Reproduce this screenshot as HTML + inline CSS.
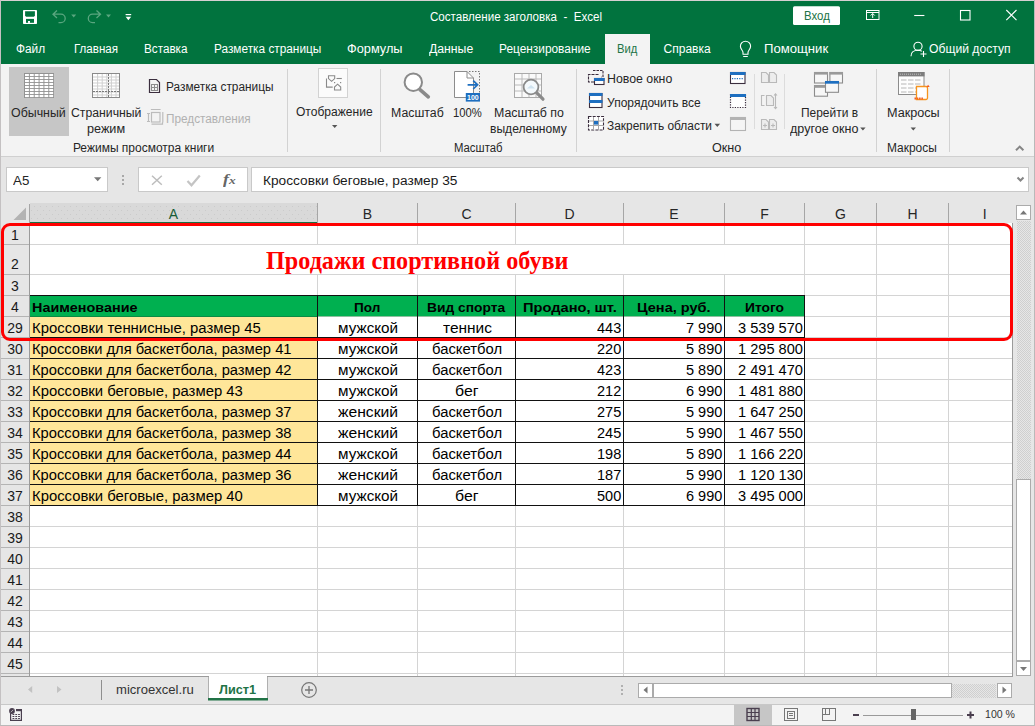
<!DOCTYPE html><html><head><meta charset="utf-8"><title>Excel</title><style>
html,body{margin:0;padding:0}body{width:1035px;height:726px;position:relative;overflow:hidden;background:#e6e6e6;font-family:"Liberation Sans",sans-serif}
.t{position:absolute;white-space:pre;transform-origin:0 0;line-height:normal}
.s{font-family:"Liberation Serif",serif}
svg{position:absolute;left:0;top:0}
</style></head><body>
<svg width="1035" height="726" viewBox="0 0 1035 726">
<defs><pattern id="dots" width="6" height="8" patternUnits="userSpaceOnUse"><rect width="6" height="8" fill="#d9d9d9"/><rect x="1" y="2" width="1" height="1" fill="#cbcbcb"/><rect x="4" y="6" width="1" height="1" fill="#cbcbcb"/></pattern><pattern id="trk" width="2" height="2" patternUnits="userSpaceOnUse"><rect width="2" height="2" fill="#e6e6e6"/><rect width="1" height="1" fill="#cfcfcf"/><rect x="1" y="1" width="1" height="1" fill="#cfcfcf"/></pattern></defs>
<rect x="0" y="0" width="1035" height="726" fill="#e6e6e6" />
<rect x="1" y="1" width="1033" height="63" fill="#01733e" />
<rect x="605" y="34" width="45" height="30" fill="#f3f3f3" />
<rect x="1" y="64" width="1033" height="92" fill="#f3f3f3" />
<rect x="1" y="156" width="1033" height="1" fill="#d0d0d0" />
<rect x="9" y="67" width="60" height="69" fill="#c6c6c6" />
<rect x="287" y="69" width="1" height="83" fill="#d2d2d2" />
<rect x="380" y="69" width="1" height="83" fill="#d2d2d2" />
<rect x="576" y="69" width="1" height="83" fill="#d2d2d2" />
<rect x="876" y="69" width="1" height="83" fill="#d2d2d2" />
<rect x="949" y="69" width="1" height="83" fill="#d2d2d2" />
<rect x="754" y="74" width="1" height="55" fill="#dcdcdc" />
<rect x="784" y="74" width="1" height="55" fill="#dcdcdc" />
<rect x="6.5" y="167.5" width="101" height="24" fill="#fff" stroke="#c9c9c9"/>
<rect x="138.5" y="167.5" width="109" height="24" fill="#fff" stroke="#c9c9c9"/>
<rect x="251.5" y="167.5" width="777" height="24" fill="#fff" stroke="#c9c9c9"/>
<path d="M94 177.300h7.400l-3.700 4z" fill="#777"/>
<rect x="122" y="175" width="2" height="2" fill="#a8a8a8" />
<rect x="122" y="179" width="2" height="2" fill="#a8a8a8" />
<rect x="122" y="183" width="2" height="2" fill="#a8a8a8" />
<path d="M152 175.800l9.800 9M161.800 175.800l-9.800 9" stroke="#bdbdbd" stroke-width="1.500" fill="none"/>
<path d="M187.500 181l4 4.300l8.300-9.800" stroke="#c4c4c4" stroke-width="2.200" fill="none"/>
<path d="M1017.500 177.500l3 3l3-3" stroke="#858585" stroke-width="2" fill="none"/>
<rect x="30" y="203" width="287" height="19" fill="url(#dots)" />
<rect x="30" y="222" width="287" height="1" fill="#1a6e42" />
<path d="M13.5 220L26 207.5V220z" fill="#b3b3b3"/>
<rect x="317" y="203" width="1" height="20" fill="#a6a6a6" />
<rect x="417" y="203" width="1" height="20" fill="#a6a6a6" />
<rect x="515" y="203" width="1" height="20" fill="#a6a6a6" />
<rect x="623" y="203" width="1" height="20" fill="#a6a6a6" />
<rect x="724" y="203" width="1" height="20" fill="#a6a6a6" />
<rect x="804" y="203" width="1" height="20" fill="#a6a6a6" />
<rect x="876" y="203" width="1" height="20" fill="#a6a6a6" />
<rect x="948" y="203" width="1" height="20" fill="#a6a6a6" />
<rect x="29" y="204" width="1" height="19" fill="#a6a6a6" />
<rect x="30" y="223" width="982" height="453" fill="#fff" />
<rect x="30" y="244" width="982" height="1" fill="#d4d4d4" />
<rect x="30" y="274" width="982" height="1" fill="#d4d4d4" />
<rect x="30" y="295" width="982" height="1" fill="#d4d4d4" />
<rect x="30" y="316" width="982" height="1" fill="#d4d4d4" />
<rect x="30" y="337" width="982" height="1" fill="#d4d4d4" />
<rect x="30" y="358" width="982" height="1" fill="#d4d4d4" />
<rect x="30" y="379" width="982" height="1" fill="#d4d4d4" />
<rect x="30" y="400" width="982" height="1" fill="#d4d4d4" />
<rect x="30" y="421" width="982" height="1" fill="#d4d4d4" />
<rect x="30" y="442" width="982" height="1" fill="#d4d4d4" />
<rect x="30" y="463" width="982" height="1" fill="#d4d4d4" />
<rect x="30" y="484" width="982" height="1" fill="#d4d4d4" />
<rect x="30" y="505" width="982" height="1" fill="#d4d4d4" />
<rect x="30" y="526" width="982" height="1" fill="#d4d4d4" />
<rect x="30" y="547" width="982" height="1" fill="#d4d4d4" />
<rect x="30" y="568" width="982" height="1" fill="#d4d4d4" />
<rect x="30" y="589" width="982" height="1" fill="#d4d4d4" />
<rect x="30" y="610" width="982" height="1" fill="#d4d4d4" />
<rect x="30" y="631" width="982" height="1" fill="#d4d4d4" />
<rect x="30" y="652" width="982" height="1" fill="#d4d4d4" />
<rect x="30" y="673" width="982" height="1" fill="#d4d4d4" />
<rect x="317" y="223" width="1" height="453" fill="#d4d4d4" />
<rect x="417" y="223" width="1" height="453" fill="#d4d4d4" />
<rect x="515" y="223" width="1" height="453" fill="#d4d4d4" />
<rect x="623" y="223" width="1" height="453" fill="#d4d4d4" />
<rect x="724" y="223" width="1" height="453" fill="#d4d4d4" />
<rect x="804" y="223" width="1" height="453" fill="#d4d4d4" />
<rect x="876" y="223" width="1" height="453" fill="#d4d4d4" />
<rect x="948" y="223" width="1" height="453" fill="#d4d4d4" />
<rect x="30" y="245" width="774" height="29" fill="#fff" />
<rect x="1" y="223" width="28" height="453" fill="#e6e6e6" />
<rect x="29" y="223" width="1" height="453" fill="#9b9b9b" />
<rect x="1" y="244" width="28" height="1" fill="#b4b4b4" />
<rect x="1" y="274" width="28" height="1" fill="#b4b4b4" />
<rect x="1" y="295" width="28" height="1" fill="#b4b4b4" />
<rect x="1" y="316" width="28" height="1" fill="#b4b4b4" />
<rect x="1" y="337" width="28" height="1" fill="#b4b4b4" />
<rect x="1" y="358" width="28" height="1" fill="#b4b4b4" />
<rect x="1" y="379" width="28" height="1" fill="#b4b4b4" />
<rect x="1" y="400" width="28" height="1" fill="#b4b4b4" />
<rect x="1" y="421" width="28" height="1" fill="#b4b4b4" />
<rect x="1" y="442" width="28" height="1" fill="#b4b4b4" />
<rect x="1" y="463" width="28" height="1" fill="#b4b4b4" />
<rect x="1" y="484" width="28" height="1" fill="#b4b4b4" />
<rect x="1" y="505" width="28" height="1" fill="#b4b4b4" />
<rect x="1" y="526" width="28" height="1" fill="#b4b4b4" />
<rect x="1" y="547" width="28" height="1" fill="#b4b4b4" />
<rect x="1" y="568" width="28" height="1" fill="#b4b4b4" />
<rect x="1" y="589" width="28" height="1" fill="#b4b4b4" />
<rect x="1" y="610" width="28" height="1" fill="#b4b4b4" />
<rect x="1" y="631" width="28" height="1" fill="#b4b4b4" />
<rect x="1" y="652" width="28" height="1" fill="#b4b4b4" />
<rect x="1" y="673" width="28" height="1" fill="#b4b4b4" />
<rect x="1012" y="223" width="1" height="454" fill="#9b9b9b" />
<rect x="1" y="676" width="1012" height="1" fill="#9b9b9b" />
<rect x="30" y="296" width="774" height="20" fill="#00b050" />
<rect x="30" y="317" width="287" height="188" fill="#ffe699" />
<rect x="30" y="295" width="775" height="1" fill="#111" />
<rect x="30" y="316" width="287" height="1" fill="#0c8a45" />
<rect x="318" y="316" width="486" height="1" fill="#8fbf9f" />
<rect x="30" y="337" width="775" height="1" fill="#111" />
<rect x="30" y="358" width="775" height="1" fill="#111" />
<rect x="30" y="379" width="775" height="1" fill="#111" />
<rect x="30" y="400" width="775" height="1" fill="#111" />
<rect x="30" y="421" width="775" height="1" fill="#111" />
<rect x="30" y="442" width="775" height="1" fill="#111" />
<rect x="30" y="463" width="775" height="1" fill="#111" />
<rect x="30" y="484" width="775" height="1" fill="#111" />
<rect x="30" y="505" width="775" height="1" fill="#111" />
<rect x="317" y="295" width="1" height="211" fill="#111" />
<rect x="417" y="295" width="1" height="211" fill="#111" />
<rect x="515" y="295" width="1" height="211" fill="#111" />
<rect x="623" y="295" width="1" height="211" fill="#111" />
<rect x="724" y="295" width="1" height="211" fill="#111" />
<rect x="804" y="295" width="1" height="211" fill="#111" />
<rect x="1017" y="221" width="14" height="258" fill="url(#trk)" />
<rect x="1016.5" y="205.5" width="14" height="14" fill="#fff" stroke="#ababab"/>
<path d="M1020 214.5h7l-3.5-4z" fill="#777"/>
<rect x="1016.5" y="479.5" width="14" height="181" fill="#fff" stroke="#ababab"/>
<rect x="1016.5" y="661.5" width="14" height="14" fill="#fff" stroke="#ababab"/>
<path d="M1020 667h7l-3.5 4z" fill="#777"/>
<rect x="101" y="680" width="1" height="20" fill="#8f8f8f" />
<rect x="209" y="677" width="59" height="23" fill="#fff" />
<rect x="208" y="677" width="1" height="23" fill="#b0b0b0" />
<rect x="267" y="677" width="1" height="23" fill="#b0b0b0" />
<rect x="208" y="698" width="60" height="2.5" fill="#217346" />
<rect x="209" y="676" width="58" height="1" fill="#fff" />
<path d="M28 689.5l4.200-3.500v7z M61.5 689.5l-4.5-3.5v7z" fill="#c2c2c2"/>
<circle cx="309" cy="690" r="7.3" fill="none" stroke="#777" stroke-width="1.2"/><path d="M305 690h8M309 686v8" stroke="#777" stroke-width="1.3"/>
<rect x="621" y="685" width="2" height="2" fill="#b0b0b0" />
<rect x="621" y="689" width="2" height="2" fill="#b0b0b0" />
<rect x="621" y="693" width="2" height="2" fill="#b0b0b0" />
<rect x="638.5" y="683.5" width="14" height="14" fill="#fff" stroke="#ababab"/>
<path d="M647.5 686.5v7l-4-3.5z" fill="#777"/>
<rect x="653.5" y="683.5" width="298" height="14" fill="#fff" stroke="#ababab"/>
<rect x="952" y="684" width="44" height="14" fill="url(#trk)" />
<rect x="997.5" y="683.5" width="14" height="14" fill="#fff" stroke="#ababab"/>
<path d="M1002.5 686.5v7l4-3.5z" fill="#777"/>
<rect x="1" y="704" width="1033" height="1" fill="#c8c8c8" />
<rect x="1" y="705" width="1033" height="20" fill="#f3f3f3" />
<rect x="734" y="705" width="38" height="20" fill="#c6c6c6" />
<path d="M10.600 713v7.400h10.800v-11.200" fill="none" stroke="#4a3f4f" stroke-width="1.200"/><rect x="16" y="709" width="6" height="2.200" fill="#4a3f4f"/><circle cx="12" cy="711" r="2.900" fill="#4a3f4f"/><path d="M10.800 712.200l2.400-2.400" stroke="#d8d8d8" stroke-width="0.700"/>
<rect x="12.5" y="714" width="1.8" height="1" fill="#4a3f4f" />
<rect x="15.3" y="714" width="1.8" height="1" fill="#4a3f4f" />
<rect x="18.1" y="714" width="1.8" height="1" fill="#4a3f4f" />
<rect x="12.5" y="716" width="1.8" height="1" fill="#4a3f4f" />
<rect x="15.3" y="716" width="1.8" height="1" fill="#4a3f4f" />
<rect x="18.1" y="716" width="1.8" height="1" fill="#4a3f4f" />
<rect x="12.5" y="718" width="1.8" height="1" fill="#4a3f4f" />
<rect x="15.3" y="718" width="1.8" height="1" fill="#4a3f4f" />
<rect x="18.1" y="718" width="1.8" height="1" fill="#4a3f4f" />
<g stroke="#4a3f4f" fill="none"><rect x="747" y="708.5" width="12" height="12" stroke-width="1.4"/><path d="M751.3 708.5v12M755 708.5v12M747 712.5h12M747 716.5h12" stroke-width="1.2"/></g>
<g stroke="#777" fill="none"><rect x="784.5" y="708.5" width="13" height="12"/><rect x="787.5" y="711.5" width="7" height="7"/><path d="M789 713.5h4M789 715.5h4" /></g>
<g stroke="#777" fill="none"><rect x="822.5" y="708.5" width="13" height="12"/><path d="M825.5 708.5v6M829.5 708.5v6M822.5 714.500h7.500" /></g>
<rect x="853" y="714" width="6" height="2" fill="#4a3f4f" />
<rect x="863" y="715" width="100" height="1" fill="#9a9a9a" />
<rect x="911" y="709" width="5" height="11" fill="#666" />
<rect x="967" y="714" width="7" height="2" fill="#4a3f4f" />
<rect x="969.5" y="711.5" width="2" height="7" fill="#4a3f4f" />
<rect x="0" y="0" width="1035" height="1" fill="#d6d0d2" />
<rect x="0" y="0" width="1" height="726" fill="#c4c1c2" />
<rect x="1034" y="0" width="1" height="726" fill="#b9b9b9" />
<rect x="0" y="725" width="1035" height="1" fill="#b9b9b9" />
<rect x="23" y="10" width="14" height="14" rx="0.800" fill="#fff"/><path d="M25.100 11.200h9.800v4.600l-1 1h-7.800l-1-1z" fill="#01733e"/><rect x="26" y="18.900" width="8" height="3.900" fill="#01733e"/><rect x="28" y="21" width="2" height="1.900" fill="#fff"/>
<g fill="none" stroke="#5aa67f" stroke-width="1.3"><path d="M57 10.5l-4 3.7l4 3.7M53 14.2h8a4.2 4.2 0 0 1 0 8.400h-2.500"/><path d="M96.500 10.500l4 3.700l-4 3.700M100.500 14.200h-8a4.200 4.200 0 0 0 0 8.400h2.500"/></g>
<path d="M71.200 14.600h5l-2.500 3z M106 14.600h5l-2.500 3z" fill="#5aa67f"/>
<rect x="125.600" y="14" width="5.600" height="1.200" fill="#fff"/><path d="M125.600 16.800h5.600l-2.800 3.400z" fill="#fff"/>
<rect x="793" y="6.300" width="47" height="18.700" rx="1.500" fill="#fff"/>
<g fill="none" stroke="#fff" stroke-width="1"><rect x="866.500" y="10.500" width="12.500" height="9"/><path d="M866.500 12.500h12.500M872.700 18v-4.500M870.700 15.500l2-2l2 2"/></g>
<g fill="none" stroke="#fff" stroke-width="1.100"><path d="M914.200 15.500h10.200"/><rect x="960.500" y="10.500" width="9.500" height="9.500"/><path d="M1006.300 10l10.200 10.200M1016.500 10l-10.200 10.200"/></g>
<g fill="none" stroke="#fff" stroke-width="1.100"><path d="M743 52.500c0-2-2.600-3.200-2.600-6.200a5.100 5.100 0 0 1 10.200 0c0 3-2.600 4.200-2.600 6.200v1.800h-5zM743.200 56.500h4.600"/></g>
<g fill="none" stroke="#fff" stroke-width="1.100"><circle cx="918" cy="46.300" r="4.100"/><path d="M911 56.300c0-4 3-6 7-6c1.500 0 2.800 0.300 3.800 0.900M923.500 51v6M920.500 54h6"/></g>
<rect x="24" y="73" width="30" height="25" fill="#929292"/>
<rect x="25" y="74" width="3.9" height="2.1" fill="#fff" />
<rect x="29.85" y="74" width="3.9" height="2.1" fill="#fff" />
<rect x="34.7" y="74" width="3.9" height="2.1" fill="#fff" />
<rect x="39.55" y="74" width="3.9" height="2.1" fill="#fff" />
<rect x="44.4" y="74" width="3.9" height="2.1" fill="#fff" />
<rect x="49.25" y="74" width="3.9" height="2.1" fill="#fff" />
<rect x="25" y="77" width="3.9" height="2.1" fill="#fff" />
<rect x="29.85" y="77" width="3.9" height="2.1" fill="#fff" />
<rect x="34.7" y="77" width="3.9" height="2.1" fill="#fff" />
<rect x="39.55" y="77" width="3.9" height="2.1" fill="#fff" />
<rect x="44.4" y="77" width="3.9" height="2.1" fill="#fff" />
<rect x="49.25" y="77" width="3.9" height="2.1" fill="#fff" />
<rect x="25" y="80" width="3.9" height="2.1" fill="#fff" />
<rect x="29.85" y="80" width="3.9" height="2.1" fill="#fff" />
<rect x="34.7" y="80" width="3.9" height="2.1" fill="#fff" />
<rect x="39.55" y="80" width="3.9" height="2.1" fill="#fff" />
<rect x="44.4" y="80" width="3.9" height="2.1" fill="#fff" />
<rect x="49.25" y="80" width="3.9" height="2.1" fill="#fff" />
<rect x="25" y="83" width="3.9" height="2.1" fill="#fff" />
<rect x="29.85" y="83" width="3.9" height="2.1" fill="#fff" />
<rect x="34.7" y="83" width="3.9" height="2.1" fill="#fff" />
<rect x="39.55" y="83" width="3.9" height="2.1" fill="#fff" />
<rect x="44.4" y="83" width="3.9" height="2.1" fill="#fff" />
<rect x="49.25" y="83" width="3.9" height="2.1" fill="#fff" />
<rect x="25" y="86" width="3.9" height="2.1" fill="#fff" />
<rect x="29.85" y="86" width="3.9" height="2.1" fill="#fff" />
<rect x="34.7" y="86" width="3.9" height="2.1" fill="#fff" />
<rect x="39.55" y="86" width="3.9" height="2.1" fill="#fff" />
<rect x="44.4" y="86" width="3.9" height="2.1" fill="#fff" />
<rect x="49.25" y="86" width="3.9" height="2.1" fill="#fff" />
<rect x="25" y="89" width="3.9" height="2.1" fill="#fff" />
<rect x="29.85" y="89" width="3.9" height="2.1" fill="#fff" />
<rect x="34.7" y="89" width="3.9" height="2.1" fill="#fff" />
<rect x="39.55" y="89" width="3.9" height="2.1" fill="#fff" />
<rect x="44.4" y="89" width="3.9" height="2.1" fill="#fff" />
<rect x="49.25" y="89" width="3.9" height="2.1" fill="#fff" />
<rect x="25" y="92" width="3.9" height="2.1" fill="#fff" />
<rect x="29.85" y="92" width="3.9" height="2.1" fill="#fff" />
<rect x="34.7" y="92" width="3.9" height="2.1" fill="#fff" />
<rect x="39.55" y="92" width="3.9" height="2.1" fill="#fff" />
<rect x="44.4" y="92" width="3.9" height="2.1" fill="#fff" />
<rect x="49.25" y="92" width="3.9" height="2.1" fill="#fff" />
<rect x="25" y="95" width="3.9" height="2.1" fill="#fff" />
<rect x="29.85" y="95" width="3.9" height="2.1" fill="#fff" />
<rect x="34.7" y="95" width="3.9" height="2.1" fill="#fff" />
<rect x="39.55" y="95" width="3.9" height="2.1" fill="#fff" />
<rect x="44.4" y="95" width="3.9" height="2.1" fill="#fff" />
<rect x="49.25" y="95" width="3.9" height="2.1" fill="#fff" />
<rect x="92.500" y="73.500" width="27" height="24" fill="#fff" stroke="#8a8a8a"/>
<rect x="93" y="76.5" width="26" height="1" fill="#cfcfcf" />
<rect x="93" y="79.5" width="26" height="1" fill="#cfcfcf" />
<rect x="93" y="82.5" width="26" height="1" fill="#cfcfcf" />
<rect x="93" y="85.5" width="26" height="1" fill="#cfcfcf" />
<rect x="93" y="88.5" width="26" height="1" fill="#cfcfcf" />
<rect x="93" y="91.5" width="26" height="1" fill="#cfcfcf" />
<rect x="93" y="94.5" width="26" height="1" fill="#cfcfcf" />
<rect x="97.1" y="74" width="1" height="23" fill="#cfcfcf" />
<rect x="101.7" y="74" width="1" height="23" fill="#cfcfcf" />
<rect x="106.3" y="74" width="1" height="23" fill="#cfcfcf" />
<rect x="110.9" y="74" width="1" height="23" fill="#cfcfcf" />
<rect x="115.5" y="74" width="1" height="23" fill="#cfcfcf" />
<path d="M108.500 74v23.500M93 91.500h26.500" stroke="#7a7a7a" stroke-width="1" stroke-dasharray="2 1" fill="none"/>
<g fill="none" stroke="#3b2e3e" stroke-width="1.200"><path d="M149.500 79.500h7l3 3v10h-10z"/></g><g fill="none" stroke="#8c8c8c" stroke-width="1"><rect x="151.500" y="84.500" width="6" height="6"/><path d="M154.500 84.500v6M151.500 87.500h6"/></g>
<g fill="none" stroke="#bcbcbc" stroke-width="1.200"><path d="M148.500 113.500v8M147 113.500h3M147 121.500h3"/><rect x="151.500" y="112.500" width="8.500" height="9.500"/><path d="M151.500 110v-0.500h8.500v0.500M162.300 112.500h0.500v9.500h-0.500M151.500 124.200h11v-2"/></g>
<rect x="318.500" y="68.500" width="29" height="29" fill="#fbfbfb" stroke="#d2d2d2"/>
<g fill="none" stroke="#8a8a8a" stroke-width="1.100"><path d="M326.500 78.500v8.600h6.200"/><path d="M328.500 75.800h6.200v2.800l-3.100 2.700l-3.100-2.700z"/><path d="M336.500 78.500h5.300"/><path d="M334.500 90h6.200v-3l-3.100-2.800l-3.100 2.800z"/></g><rect x="334" y="82" width="1.200" height="1.200" fill="#8a8a8a"/><rect x="340" y="82" width="1.200" height="1.200" fill="#8a8a8a"/>
<path d="M332 125h5.400l-2.700 3z" fill="#555"/>
<path d="M419.700 89.300l8.600 7.600" stroke="#8a8a8a" stroke-width="3.600" stroke-linecap="round" fill="none"/><circle cx="413.300" cy="82.200" r="8.700" fill="#fff" stroke="#8a8a8a" stroke-width="2"/>
<path d="M454.500 71.500h12.500l6.500 6.500v19.500h-19z" fill="#fff" stroke="#8c8c8c"/><path d="M467 71.500v6.500h6.500" fill="none" stroke="#8c8c8c"/>
<path d="M469 71.500h10.500v21" fill="none" stroke="#777" stroke-dasharray="1.500 1.500"/>
<path d="M467.600 84.800h9.500M473.200 80.600l4.400 4.200l-4.400 4.200" fill="none" stroke="#1e6fc0" stroke-width="1.700"/>
<rect x="465.800" y="93" width="14.200" height="8.600" fill="#1e6fc0"/>
<text x="472.900" y="100" font-family="Liberation Sans, sans-serif" font-size="7" font-weight="700" fill="#fff" text-anchor="middle">100</text>
<rect x="514.500" y="73.500" width="27" height="24" fill="#fafafa" stroke="#a9a9a9"/>
<rect x="521.5" y="74" width="1" height="23" fill="#b9b9b9" />
<rect x="528.5" y="74" width="1" height="23" fill="#b9b9b9" />
<rect x="535.5" y="74" width="1" height="23" fill="#b9b9b9" />
<rect x="515" y="78.5" width="26" height="1" fill="#b9b9b9" />
<rect x="515" y="84.5" width="26" height="1" fill="#b9b9b9" />
<rect x="515" y="90.5" width="26" height="1" fill="#b9b9b9" />
<path d="M536.800 92.800l6.200 6.400" stroke="#8a8a8a" stroke-width="3.200" stroke-linecap="round" fill="none"/><circle cx="531" cy="87" r="7.400" fill="#f4f9fc" stroke="#8a8a8a" stroke-width="1.800"/><path d="M527 88.500l4-3.500l4 3.500z" fill="#cfe3ef"/>
<g fill="none" stroke="#3b2e3e" stroke-width="1.100"><path d="M593 70.500h10v6.500h-1.500" stroke-dasharray="2.500 1"/><path d="M594 82h-5.500v-7.500h10" stroke-dasharray="3 1"/></g>
<rect x="594.500" y="78.500" width="9.500" height="6" fill="#fff" stroke="#3b2e3e" stroke-width="1.100"/><rect x="594" y="78" width="10.500" height="3" fill="#1e6fc0"/>
<rect x="589.500" y="93.500" width="12.500" height="14" fill="#fff" stroke="#3b2e3e" stroke-width="1.100"/><rect x="589" y="93" width="13.500" height="3" fill="#1e6fc0"/><rect x="589" y="100" width="13.500" height="3" fill="#1e6fc0"/>
<rect x="588.500" y="116.500" width="15" height="13.500" fill="#fff" stroke="#3b2e3e" stroke-width="1.100" stroke-dasharray="3 1.200"/>
<path d="M593.500 117v13M598.500 117v13M589 121h14.500M589 125.500h14.500" stroke="#a8a8a8" stroke-width="1" fill="none"/><rect x="594" y="121" width="4.200" height="3.600" fill="#1e6fc0"/>
<path d="M714.500 123.800h5.600l-2.800 3.100z M860.200 127.600h5.400l-2.700 3z M910.600 127.400h5.400l-2.700 3z" fill="#555"/>
<rect x="730.500" y="72.500" width="14.500" height="11" fill="#fff" stroke="#3b2e3e" stroke-width="1.100"/><rect x="730" y="72" width="15.500" height="3" fill="#1e6fc0"/><path d="M732 78.600h12" stroke="#1e6fc0" stroke-width="1.200" stroke-dasharray="1.200 1.200"/>
<rect x="730.500" y="94.500" width="15" height="13" fill="#fff" stroke="#3b2e3e" stroke-width="1.200" stroke-dasharray="1.200 1.300"/><rect x="730" y="94" width="16" height="3" fill="#1e6fc0"/>
<rect x="730.500" y="117.500" width="15" height="13" fill="#f5f5f5" stroke="#b3b3b3" stroke-width="1.100"/><rect x="730" y="117" width="16" height="3" fill="#b3b3b3"/>
<g fill="#ededed" stroke="#b9b9b9" stroke-width="1.100"><path d="M761.500 72.500h4.500l2.500 2.500v7.500h-7z"/><path d="M769.500 72.500h4.500l2.500 2.500v7.500h-7z"/><path d="M764.500 95.500h-3v10h3" fill="none"/><path d="M766.500 95.500h4.500l2.500 2.500v7.500h-7z"/><path d="M775.500 94v14.500M774 95.500l1.500-1.700l1.500 1.700M774 107l1.500 1.700l1.500-1.700" fill="none"/><path d="M761.500 119.500h4.500l2.500 2.500v7.500h-7z"/><path d="M769.500 119.500h4.500l2.500 2.500v7.500h-7z"/><path d="M763 125.500h4M771 125.500h4M765 123.500v4M773 123.500v4" fill="none"/></g>
<rect x="814.5" y="72.5" width="13" height="10.5" fill="#f7f7f7" stroke="#8c8c8c" stroke-width="1.100"/><rect x="814" y="72" width="14" height="2.6" fill="#9a9a9a"/>
<rect x="829.9" y="72.5" width="12.6" height="10.5" fill="#f7f7f7" stroke="#8c8c8c" stroke-width="1.100"/><rect x="829.4" y="72" width="13.6" height="2.6" fill="#9a9a9a"/>
<rect x="814.5" y="85.7" width="13" height="10.5" fill="#f7f7f7" stroke="#8c8c8c" stroke-width="1.100"/><rect x="814" y="85.2" width="14" height="2.6" fill="#9a9a9a"/>
<rect x="825.5" y="81.5" width="13" height="10.8" fill="#f7f7f7" stroke="#8c8c8c" stroke-width="1.100"/><rect x="825" y="81" width="14" height="2.7" fill="#1e6fc0"/>
<rect x="898.500" y="72.500" width="25.500" height="22" fill="#fdfdfd" stroke="#8c8c8c"/><rect x="898" y="72" width="26.500" height="4.400" fill="#7d7d7d"/>
<rect x="901" y="79.5" width="5.5" height="1" fill="#b8b8b8" />
<rect x="901" y="83.5" width="5.5" height="1" fill="#b8b8b8" />
<rect x="901" y="87.5" width="5.5" height="1" fill="#b8b8b8" />
<rect x="901" y="91.5" width="5.5" height="1" fill="#b8b8b8" />
<rect x="908" y="79.5" width="5.5" height="1" fill="#b8b8b8" />
<rect x="908" y="83.5" width="5.5" height="1" fill="#b8b8b8" />
<rect x="908" y="87.5" width="5.5" height="1" fill="#b8b8b8" />
<rect x="908" y="91.5" width="5.5" height="1" fill="#b8b8b8" />
<rect x="915" y="79.5" width="5.5" height="1" fill="#b8b8b8" />
<rect x="915" y="83.5" width="5.5" height="1" fill="#b8b8b8" />
<rect x="915" y="87.5" width="5.5" height="1" fill="#b8b8b8" />
<rect x="915" y="91.5" width="5.5" height="1" fill="#b8b8b8" />
<path d="M900 74.200h22" stroke="#bdbdbd" stroke-width="1" stroke-dasharray="1 1"/>
<path d="M916.500 86.500h9.500a1.500 1.500 0 0 1 1.500 1.500v10a1.500 1.500 0 0 1 -1.500 1.500h-9.500z" fill="#fff" stroke="#f7941d" stroke-width="1.300"/><path d="M914.500 98.500h8.500" stroke="#f15a24" stroke-width="2" stroke-dasharray="1.500 0.800"/><path d="M926.500 87l1.600-2.200l1.600 2.200z" fill="#f15a24"/>
<path d="M1016 150.300l3.700-3.700l3.700 3.700" fill="none" stroke="#858585" stroke-width="2"/>
</svg>
<span id="t0" class="t" style="left:430.00px;top:9.59px;font-size:12.5px;color:#ffffff;transform:scaleX(0.9264);">Составление заголовка  -  Excel</span>
<span id="t1" class="t" style="left:804.20px;top:9.24px;font-size:12px;color:#217346;transform:scaleX(0.9501);">Вход</span>
<span id="t2" class="t" style="left:16.10px;top:41.94px;font-size:12px;color:#ffffff;transform:scaleX(0.9859);">Файл</span>
<span id="t3" class="t" style="left:74.10px;top:41.94px;font-size:12px;color:#ffffff;transform:scaleX(0.9631);">Главная</span>
<span id="t4" class="t" style="left:144.10px;top:41.94px;font-size:12px;color:#ffffff;transform:scaleX(0.9751);">Вставка</span>
<span id="t5" class="t" style="left:213.90px;top:41.94px;font-size:12px;color:#ffffff;transform:scaleX(0.9855);">Разметка страницы</span>
<span id="t6" class="t" style="left:347.10px;top:41.94px;font-size:12px;color:#ffffff;transform:scaleX(1.0628);">Формулы</span>
<span id="t7" class="t" style="left:428.70px;top:41.94px;font-size:12px;color:#ffffff;transform:scaleX(1.0194);">Данные</span>
<span id="t8" class="t" style="left:499.00px;top:41.94px;font-size:12px;color:#ffffff;transform:scaleX(0.9895);">Рецензирование</span>
<span id="t9" class="t" style="left:617.10px;top:41.94px;font-size:12px;color:#217346;transform:scaleX(0.9347);">Вид</span>
<span id="t10" class="t" style="left:663.60px;top:41.94px;font-size:12px;color:#ffffff;">Справка</span>
<span id="t11" class="t" style="left:764.40px;top:41.94px;font-size:12px;color:#ffffff;transform:scaleX(1.0939);">Помощник</span>
<span id="t12" class="t" style="left:929.00px;top:41.94px;font-size:12px;color:#ffffff;transform:scaleX(1.0121);">Общий доступ</span>
<span id="t13" class="t" style="left:11.00px;top:106.14px;font-size:12px;color:#262626;transform:scaleX(1.0330);">Обычный</span>
<span id="t14" class="t" style="left:70.80px;top:106.14px;font-size:12px;color:#262626;transform:scaleX(1.0196);">Страничный</span>
<span id="t15" class="t" style="left:87.10px;top:122.14px;font-size:12px;color:#262626;transform:scaleX(1.0524);">режим</span>
<span id="t16" class="t" style="left:165.80px;top:79.84px;font-size:12px;color:#262626;transform:scaleX(0.9874);">Разметка страницы</span>
<span id="t17" class="t" style="left:165.80px;top:111.64px;font-size:12px;color:#b1b1b1;transform:scaleX(0.9796);">Представления</span>
<span id="t18" class="t" style="left:295.70px;top:104.84px;font-size:12px;color:#262626;transform:scaleX(1.0040);">Отображение</span>
<span id="t19" class="t" style="left:72.90px;top:141.14px;font-size:12px;color:#262626;">Режимы просмотра книги</span>
<span id="t20" class="t" style="left:390.70px;top:106.14px;font-size:12px;color:#262626;transform:scaleX(1.0264);">Масштаб</span>
<span id="t21" class="t" style="left:452.80px;top:106.14px;font-size:12px;color:#262626;transform:scaleX(0.9380);">100%</span>
<span id="t22" class="t" style="left:493.70px;top:106.14px;font-size:12px;color:#262626;transform:scaleX(1.0301);">Масштаб по</span>
<span id="t23" class="t" style="left:489.90px;top:122.14px;font-size:12px;color:#262626;transform:scaleX(1.0057);">выделенному</span>
<span id="t24" class="t" style="left:454.00px;top:141.14px;font-size:12px;color:#262626;transform:scaleX(0.9446);">Масштаб</span>
<span id="t25" class="t" style="left:607.10px;top:72.44px;font-size:12px;color:#262626;transform:scaleX(1.0283);">Новое окно</span>
<span id="t26" class="t" style="left:607.10px;top:95.64px;font-size:12px;color:#262626;">Упорядочить все</span>
<span id="t27" class="t" style="left:607.10px;top:118.64px;font-size:12px;color:#262626;transform:scaleX(0.9935);">Закрепить области</span>
<span id="t28" class="t" style="left:712.10px;top:141.14px;font-size:12px;color:#262626;transform:scaleX(1.0541);">Окно</span>
<span id="t29" class="t" style="left:800.80px;top:106.14px;font-size:12px;color:#262626;transform:scaleX(0.9954);">Перейти в</span>
<span id="t30" class="t" style="left:790.20px;top:122.14px;font-size:12px;color:#262626;transform:scaleX(1.0433);">другое окно</span>
<span id="t31" class="t" style="left:886.70px;top:106.14px;font-size:12px;color:#262626;transform:scaleX(1.0533);">Макросы</span>
<span id="t32" class="t" style="left:887.40px;top:141.14px;font-size:12px;color:#262626;transform:scaleX(0.9934);">Макросы</span>
<span id="t33" class="t" style="left:13.20px;top:173.24px;font-size:13px;color:#262626;transform:scaleX(1.0248);">A5</span>
<span id="t34" class="t" style="left:262.80px;top:173.69px;font-size:12.5px;color:#1a1a1a;transform:scaleX(1.0955);">Кроссовки беговые, размер 35</span>
<span id="t35" class="t s" style="left:223.00px;top:171.83px;font-size:14px;color:#666;font-weight:700;font-style:italic;transform:scaleX(1.2699);">f<span style="font-size:10.5px">x</span></span>
<span id="t36" class="t" style="left:168.83px;top:205.83px;font-size:14px;color:#185c37;">A</span>
<span id="t37" class="t" style="left:362.83px;top:205.83px;font-size:14px;color:#262626;">B</span>
<span id="t38" class="t" style="left:461.44px;top:205.83px;font-size:14px;color:#262626;">C</span>
<span id="t39" class="t" style="left:564.44px;top:205.83px;font-size:14px;color:#262626;">D</span>
<span id="t40" class="t" style="left:669.33px;top:205.83px;font-size:14px;color:#262626;">E</span>
<span id="t41" class="t" style="left:760.22px;top:205.83px;font-size:14px;color:#262626;">F</span>
<span id="t42" class="t" style="left:835.05px;top:205.83px;font-size:14px;color:#262626;">G</span>
<span id="t43" class="t" style="left:907.44px;top:205.83px;font-size:14px;color:#262626;">H</span>
<span id="t44" class="t" style="left:982.85px;top:205.83px;font-size:14px;color:#262626;">I</span>
<span id="t45" class="t" style="left:11.10px;top:226.93px;font-size:14px;color:#1a1a1a;">1</span>
<span id="t46" class="t" style="left:11.10px;top:255.93px;font-size:14px;color:#1a1a1a;">2</span>
<span id="t47" class="t" style="left:11.10px;top:277.93px;font-size:14px;color:#1a1a1a;">3</span>
<span id="t48" class="t" style="left:11.10px;top:298.93px;font-size:14px;color:#1a1a1a;">4</span>
<span id="t49" class="t" style="left:7.21px;top:319.93px;font-size:14px;color:#1a1a1a;">29</span>
<span id="t50" class="t" style="left:7.21px;top:340.93px;font-size:14px;color:#1a1a1a;">30</span>
<span id="t51" class="t" style="left:7.21px;top:361.93px;font-size:14px;color:#1a1a1a;">31</span>
<span id="t52" class="t" style="left:7.21px;top:382.93px;font-size:14px;color:#1a1a1a;">32</span>
<span id="t53" class="t" style="left:7.21px;top:403.93px;font-size:14px;color:#1a1a1a;">33</span>
<span id="t54" class="t" style="left:7.21px;top:424.93px;font-size:14px;color:#1a1a1a;">34</span>
<span id="t55" class="t" style="left:7.21px;top:445.93px;font-size:14px;color:#1a1a1a;">35</span>
<span id="t56" class="t" style="left:7.21px;top:466.93px;font-size:14px;color:#1a1a1a;">36</span>
<span id="t57" class="t" style="left:7.21px;top:487.93px;font-size:14px;color:#1a1a1a;">37</span>
<span id="t58" class="t" style="left:7.21px;top:508.93px;font-size:14px;color:#1a1a1a;">38</span>
<span id="t59" class="t" style="left:7.21px;top:529.93px;font-size:14px;color:#1a1a1a;">39</span>
<span id="t60" class="t" style="left:7.21px;top:550.93px;font-size:14px;color:#1a1a1a;">40</span>
<span id="t61" class="t" style="left:7.21px;top:571.93px;font-size:14px;color:#1a1a1a;">41</span>
<span id="t62" class="t" style="left:7.21px;top:592.93px;font-size:14px;color:#1a1a1a;">42</span>
<span id="t63" class="t" style="left:7.21px;top:613.93px;font-size:14px;color:#1a1a1a;">43</span>
<span id="t64" class="t" style="left:7.21px;top:634.93px;font-size:14px;color:#1a1a1a;">44</span>
<span id="t65" class="t" style="left:7.21px;top:655.93px;font-size:14px;color:#1a1a1a;">45</span>
<span id="t66" class="t s" style="left:265.60px;top:246.83px;font-size:25px;color:#ff0000;font-weight:700;transform:scaleX(0.9669);">Продажи спортивной обуви</span>
<span id="t67" class="t" style="left:32.40px;top:299.58px;font-size:13.5px;color:#000;font-weight:700;transform:scaleX(1.0652);">Наименование</span>
<span id="t68" class="t" style="left:354.30px;top:299.58px;font-size:13.5px;color:#000;font-weight:700;transform:scaleX(1.0037);">Пол</span>
<span id="t69" class="t" style="left:427.40px;top:299.58px;font-size:13.5px;color:#000;font-weight:700;transform:scaleX(1.0226);">Вид спорта</span>
<span id="t70" class="t" style="left:522.80px;top:299.58px;font-size:13.5px;color:#000;font-weight:700;transform:scaleX(1.0852);">Продано, шт.</span>
<span id="t71" class="t" style="left:636.80px;top:299.58px;font-size:13.5px;color:#000;font-weight:700;transform:scaleX(1.0764);">Цена, руб.</span>
<span id="t72" class="t" style="left:745.40px;top:299.58px;font-size:13.5px;color:#000;font-weight:700;transform:scaleX(1.0242);">Итого</span>
<span id="t73" class="t" style="left:32.20px;top:319.93px;font-size:14px;color:#000;transform:scaleX(1.0636);">Кроссовки теннисные, размер 45</span>
<span id="t74" class="t" style="left:337.80px;top:319.93px;font-size:14px;color:#000;transform:scaleX(1.0887);">мужской</span>
<span id="t75" class="t" style="left:442.60px;top:319.93px;font-size:14px;color:#000;transform:scaleX(1.1054);">теннис</span>
<span id="t76" class="t" style="left:596.80px;top:319.93px;font-size:14px;color:#000;transform:scaleX(1.0360);">443</span>
<span id="t77" class="t" style="left:686.10px;top:319.93px;font-size:14px;color:#000;transform:scaleX(1.0358);">7 990</span>
<span id="t78" class="t" style="left:737.50px;top:319.93px;font-size:14px;color:#000;transform:scaleX(1.0434);">3 539 570</span>
<span id="t79" class="t" style="left:32.20px;top:340.93px;font-size:14px;color:#000;transform:scaleX(1.0507);">Кроссовки для баскетбола, размер 41</span>
<span id="t80" class="t" style="left:337.80px;top:340.93px;font-size:14px;color:#000;transform:scaleX(1.0887);">мужской</span>
<span id="t81" class="t" style="left:431.90px;top:340.93px;font-size:14px;color:#000;transform:scaleX(1.0594);">баскетбол</span>
<span id="t82" class="t" style="left:596.80px;top:340.93px;font-size:14px;color:#000;transform:scaleX(1.0360);">220</span>
<span id="t83" class="t" style="left:686.10px;top:340.93px;font-size:14px;color:#000;transform:scaleX(1.0358);">5 890</span>
<span id="t84" class="t" style="left:737.50px;top:340.93px;font-size:14px;color:#000;transform:scaleX(1.0434);">1 295 800</span>
<span id="t85" class="t" style="left:32.20px;top:361.93px;font-size:14px;color:#000;transform:scaleX(1.0507);">Кроссовки для баскетбола, размер 42</span>
<span id="t86" class="t" style="left:337.80px;top:361.93px;font-size:14px;color:#000;transform:scaleX(1.0887);">мужской</span>
<span id="t87" class="t" style="left:431.90px;top:361.93px;font-size:14px;color:#000;transform:scaleX(1.0594);">баскетбол</span>
<span id="t88" class="t" style="left:596.80px;top:361.93px;font-size:14px;color:#000;transform:scaleX(1.0360);">423</span>
<span id="t89" class="t" style="left:686.10px;top:361.93px;font-size:14px;color:#000;transform:scaleX(1.0358);">5 890</span>
<span id="t90" class="t" style="left:737.50px;top:361.93px;font-size:14px;color:#000;transform:scaleX(1.0434);">2 491 470</span>
<span id="t91" class="t" style="left:32.20px;top:382.93px;font-size:14px;color:#000;transform:scaleX(1.0607);">Кроссовки беговые, размер 43</span>
<span id="t92" class="t" style="left:337.80px;top:382.93px;font-size:14px;color:#000;transform:scaleX(1.0887);">мужской</span>
<span id="t93" class="t" style="left:455.30px;top:382.93px;font-size:14px;color:#000;transform:scaleX(1.1317);">бег</span>
<span id="t94" class="t" style="left:596.80px;top:382.93px;font-size:14px;color:#000;transform:scaleX(1.0360);">212</span>
<span id="t95" class="t" style="left:686.10px;top:382.93px;font-size:14px;color:#000;transform:scaleX(1.0358);">6 990</span>
<span id="t96" class="t" style="left:737.50px;top:382.93px;font-size:14px;color:#000;transform:scaleX(1.0434);">1 481 880</span>
<span id="t97" class="t" style="left:32.20px;top:403.93px;font-size:14px;color:#000;transform:scaleX(1.0507);">Кроссовки для баскетбола, размер 37</span>
<span id="t98" class="t" style="left:337.80px;top:403.93px;font-size:14px;color:#000;transform:scaleX(1.1201);">женский</span>
<span id="t99" class="t" style="left:431.90px;top:403.93px;font-size:14px;color:#000;transform:scaleX(1.0594);">баскетбол</span>
<span id="t100" class="t" style="left:596.80px;top:403.93px;font-size:14px;color:#000;transform:scaleX(1.0360);">275</span>
<span id="t101" class="t" style="left:686.10px;top:403.93px;font-size:14px;color:#000;transform:scaleX(1.0358);">5 990</span>
<span id="t102" class="t" style="left:737.50px;top:403.93px;font-size:14px;color:#000;transform:scaleX(1.0434);">1 647 250</span>
<span id="t103" class="t" style="left:32.20px;top:424.93px;font-size:14px;color:#000;transform:scaleX(1.0507);">Кроссовки для баскетбола, размер 38</span>
<span id="t104" class="t" style="left:337.80px;top:424.93px;font-size:14px;color:#000;transform:scaleX(1.1201);">женский</span>
<span id="t105" class="t" style="left:431.90px;top:424.93px;font-size:14px;color:#000;transform:scaleX(1.0594);">баскетбол</span>
<span id="t106" class="t" style="left:596.80px;top:424.93px;font-size:14px;color:#000;transform:scaleX(1.0360);">245</span>
<span id="t107" class="t" style="left:686.10px;top:424.93px;font-size:14px;color:#000;transform:scaleX(1.0358);">5 990</span>
<span id="t108" class="t" style="left:737.50px;top:424.93px;font-size:14px;color:#000;transform:scaleX(1.0434);">1 467 550</span>
<span id="t109" class="t" style="left:32.20px;top:445.93px;font-size:14px;color:#000;transform:scaleX(1.0507);">Кроссовки для баскетбола, размер 44</span>
<span id="t110" class="t" style="left:337.80px;top:445.93px;font-size:14px;color:#000;transform:scaleX(1.0887);">мужской</span>
<span id="t111" class="t" style="left:431.90px;top:445.93px;font-size:14px;color:#000;transform:scaleX(1.0594);">баскетбол</span>
<span id="t112" class="t" style="left:596.80px;top:445.93px;font-size:14px;color:#000;transform:scaleX(1.0360);">198</span>
<span id="t113" class="t" style="left:686.10px;top:445.93px;font-size:14px;color:#000;transform:scaleX(1.0358);">5 890</span>
<span id="t114" class="t" style="left:737.50px;top:445.93px;font-size:14px;color:#000;transform:scaleX(1.0434);">1 166 220</span>
<span id="t115" class="t" style="left:32.20px;top:466.93px;font-size:14px;color:#000;transform:scaleX(1.0507);">Кроссовки для баскетбола, размер 36</span>
<span id="t116" class="t" style="left:337.80px;top:466.93px;font-size:14px;color:#000;transform:scaleX(1.1201);">женский</span>
<span id="t117" class="t" style="left:431.90px;top:466.93px;font-size:14px;color:#000;transform:scaleX(1.0594);">баскетбол</span>
<span id="t118" class="t" style="left:596.80px;top:466.93px;font-size:14px;color:#000;transform:scaleX(1.0360);">187</span>
<span id="t119" class="t" style="left:686.10px;top:466.93px;font-size:14px;color:#000;transform:scaleX(1.0358);">5 990</span>
<span id="t120" class="t" style="left:737.50px;top:466.93px;font-size:14px;color:#000;transform:scaleX(1.0434);">1 120 130</span>
<span id="t121" class="t" style="left:32.20px;top:487.93px;font-size:14px;color:#000;transform:scaleX(1.0607);">Кроссовки беговые, размер 40</span>
<span id="t122" class="t" style="left:337.80px;top:487.93px;font-size:14px;color:#000;transform:scaleX(1.0887);">мужской</span>
<span id="t123" class="t" style="left:455.30px;top:487.93px;font-size:14px;color:#000;transform:scaleX(1.1317);">бег</span>
<span id="t124" class="t" style="left:596.80px;top:487.93px;font-size:14px;color:#000;transform:scaleX(1.0360);">500</span>
<span id="t125" class="t" style="left:686.10px;top:487.93px;font-size:14px;color:#000;transform:scaleX(1.0358);">6 990</span>
<span id="t126" class="t" style="left:737.50px;top:487.93px;font-size:14px;color:#000;transform:scaleX(1.0434);">3 495 000</span>
<span id="t127" class="t" style="left:115.80px;top:681.68px;font-size:13.5px;color:#333;transform:scaleX(0.9691);">microexcel.ru</span>
<span id="t128" class="t" style="left:219.40px;top:681.68px;font-size:13.5px;color:#217346;font-weight:700;transform:scaleX(0.9415);">Лист1</span>
<span id="t129" class="t" style="left:985.40px;top:707.75px;font-size:11px;color:#333;transform:scaleX(0.9614);">100 %</span>
<svg width="1035" height="726" viewBox="0 0 1035 726" style="pointer-events:none">
<rect x="2.5" y="224.5" width="1009" height="115" rx="7.5" ry="7.5" fill="none" stroke="#ff0000" stroke-width="3"/>
</svg>
</body></html>
